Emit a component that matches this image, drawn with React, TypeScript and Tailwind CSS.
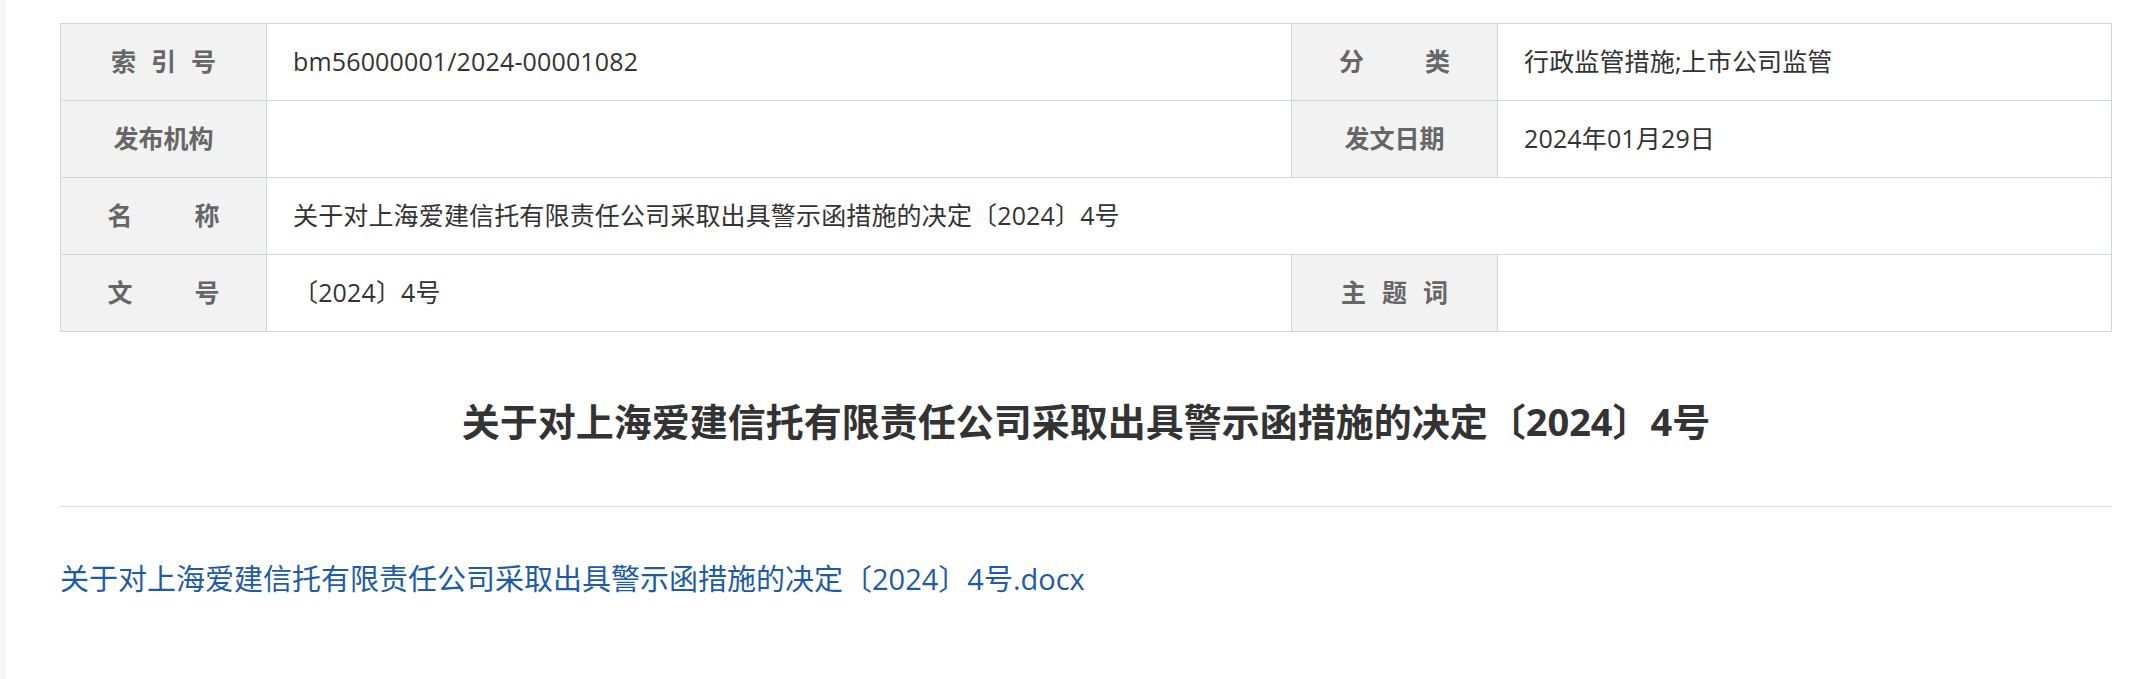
import React from "react";

const font = { fontFamily: '"Open Sans", "Noto Sans CJK SC", sans-serif' };

function Label({ chars, gap }: { chars: string[]; gap: string }) {
  return (
    <div
      className={`flex items-center justify-center bg-[#f2f2f2] border-r border-b border-[#cfd6dd] h-[77px] text-[25px] font-bold text-[#666666] ${gap}`}
    >
      {chars.map((c, i) => (
        <span key={i}>{c}</span>
      ))}
    </div>
  );
}

function Value({ children, span }: { children?: React.ReactNode; span?: boolean }) {
  return (
    <div
      className={`flex items-center pl-[26px] border-r border-b border-[#cfd6dd] h-[77px] text-[25px] tracking-[0.15px] text-[#333333] ${span ? "col-span-3" : ""}`}
    >
      {children}
    </div>
  );
}

export default function App() {
  const title = "关于对上海爱建信托有限责任公司采取出具警示函措施的决定〔2024〕4号";
  return (
    <div className="flex min-h-[679px] bg-white" style={font}>
      <div className="w-[6px] shrink-0 bg-[#f5f5f5]" />
      <div className="pl-[54px] pt-[23px]">
        <div className="w-[2052px] grid grid-cols-[206px_1025px_206px_614px] border-l border-t border-[#cfd6dd]">
          <Label chars={["索", "引", "号"]} gap="gap-[15px]" />
          <Value>bm56000001/2024-00001082</Value>
          <Label chars={["分", "类"]} gap="gap-[61px]" />
          <Value>行政监管措施;上市公司监管</Value>

          <Label chars={["发", "布", "机", "构"]} gap="gap-0" />
          <Value />
          <Label chars={["发", "文", "日", "期"]} gap="gap-0" />
          <Value>2024年01月29日</Value>

          <Label chars={["名", "称"]} gap="gap-[62px]" />
          <Value span>{title}</Value>

          <Label chars={["文", "号"]} gap="gap-[62px]" />
          <Value>〔2024〕4号</Value>
          <Label chars={["主", "题", "词"]} gap="gap-[16px]" />
          <Value />
        </div>

        <h1 className="mt-[61px] w-[2052px] text-center text-[38px] leading-[57px] font-bold text-[#333333]">
          {title}
        </h1>

        <div className="mt-[56px] w-[2052px] h-px bg-[#dddddd]" />

        <div className="mt-[50px] text-[29px] leading-[44px] text-[#1d5ba6]">
          <a href="#" className="text-[#1d5ba6]">
            {title}.docx
          </a>
        </div>
      </div>
    </div>
  );
}
